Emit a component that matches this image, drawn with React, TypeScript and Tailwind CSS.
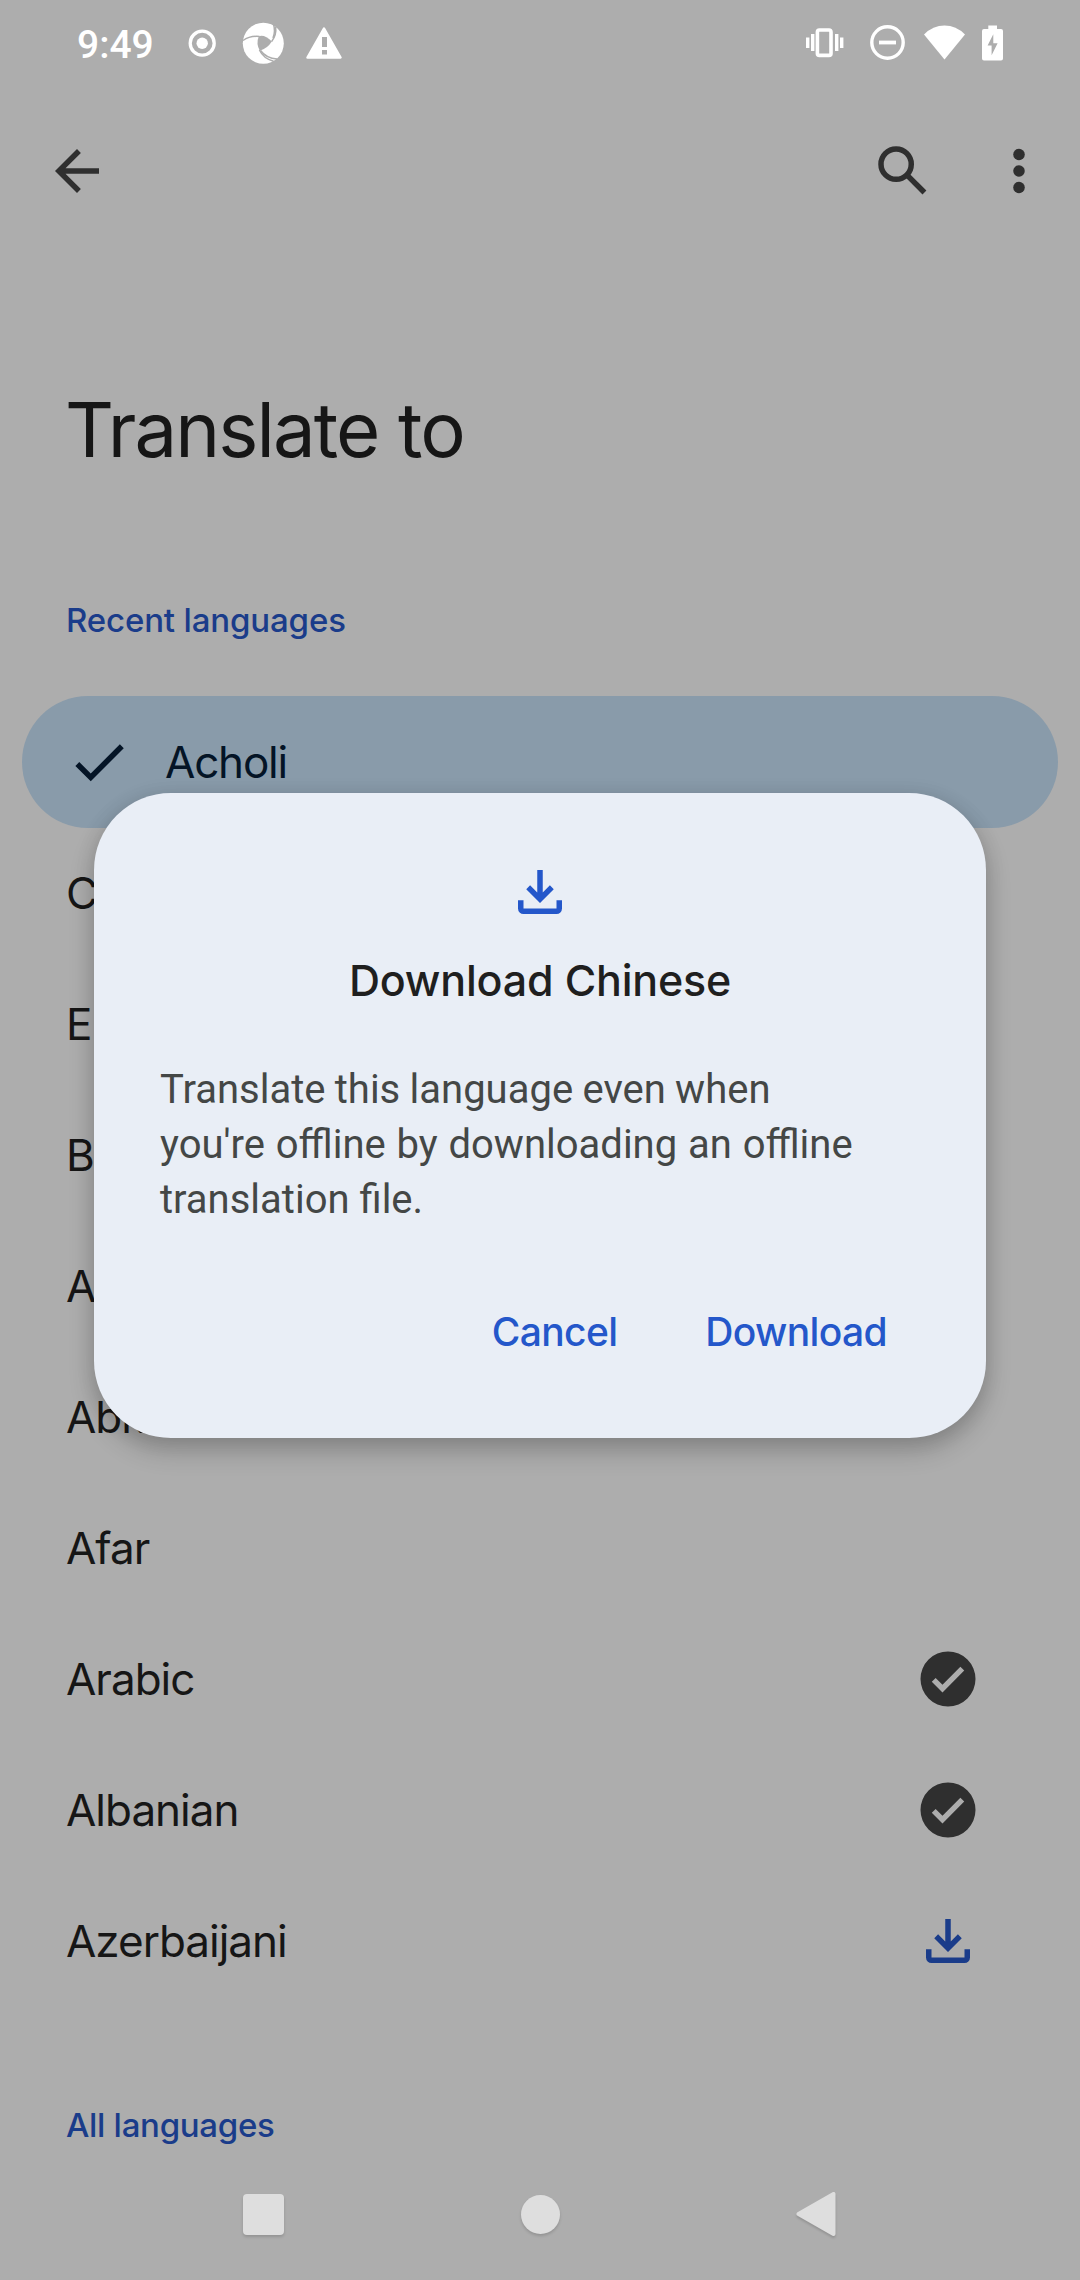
import type { ReactNode } from "react";

type Status = "downloaded" | "available";

const languages: { name: string; status?: Status }[] = [
  { name: "Chinese" },
  { name: "English" },
  { name: "Bali" },
  { name: "Afrikaans" },
  { name: "Abkhaz" },
  { name: "Afar" },
  { name: "Arabic", status: "downloaded" },
  { name: "Albanian", status: "downloaded" },
  { name: "Azerbaijani", status: "available" },
];

function Icon({ className = "", children }: { className?: string; children: ReactNode }) {
  return (
    <svg viewBox="0 0 24 24" fill="currentColor" className={`size-[66px] shrink-0 ${className}`}>
      {children}
    </svg>
  );
}

function DownloadIcon({ className }: { className: string }) {
  return (
    <Icon className={className}>
      <path d="M12 16l-5-5 1.4-1.45 2.6 2.6V4h2v8.15l2.6-2.6L17 11zM6 20q-.825 0-1.413-.587T4 18v-3h2v3h12v-3h2v3q0 .825-.587 1.413T18 20z" />
    </Icon>
  );
}

function StatusBar() {
  return (
    <header className="flex h-[88px] items-start text-white">
      <span className="ml-[77px] mt-[21px] h-12 w-[75px] whitespace-nowrap font-[Roboto] text-[39px] font-medium leading-[48px]">
        9:49
      </span>
      <svg viewBox="0 0 28 28" className="ml-[36px] mt-[29px] size-7">
        <circle cx="14.2" cy="14.2" r="12" fill="none" stroke="currentColor" strokeWidth="3.3" />
        <circle cx="14.2" cy="14.2" r="5.7" fill="currentColor" />
      </svg>
      <svg viewBox="0 0 42 42" className="ml-[26px] mt-[22px] size-[42px]">
        <circle cx="21.3" cy="21.3" r="20.5" fill="currentColor" />
        <path d="M16.8 14.2Q23 12.4 29.8 19.6Q25.5 26.5 17.8 28.8Q13.8 21.5 16.8 14.2Z" fill="#adadad" />
        <g fill="none" stroke="#adadad" strokeWidth="1.5">
          <path d="M1 18.5Q8 13.5 17.5 14.4" />
          <path d="M33.6 4.5Q34.8 12.5 29.6 19.6" />
          <path d="M31.3 1.5Q33.8 9 31 16" />
          <path d="M17.4 28Q21.5 36.5 31.5 39.2" />
          <path d="M18.5 28.5Q24.5 36.5 35 37" />
        </g>
      </svg>
      <svg viewBox="0 0 36 32" className="ml-[22px] mt-[27px] h-8 w-9">
        <path d="M18 1.5L34.5 30.5H1.5Z" fill="currentColor" stroke="currentColor" strokeWidth="2.5" strokeLinejoin="round" />
        <path d="M16 10h5v10h-5zM16 23h5v4.5h-5z" fill="#adadad" />
      </svg>
      <svg viewBox="0 0 40 30" className="ml-auto mt-[28px] h-[30px] w-10">
        <rect x="12.4" y="2" width="13.6" height="25.4" rx="2" fill="none" stroke="currentColor" strokeWidth="3.6" />
        <path d="M6 6h3.4v17H6zM1 9.5h3.4v10.500H1zM30 6h3.400v17H30zM35 9.5h3.400v10.500H35z" fill="currentColor" />
      </svg>
      <svg viewBox="0 0 36 36" className="ml-[25px] mt-[24px] size-9">
        <circle cx="17.500" cy="18.500" r="15.700" fill="none" stroke="currentColor" strokeWidth="3.400" />
        <path d="M9 16.600h17v3.800H9z" fill="currentColor" />
      </svg>
      <svg viewBox="0 0 42 36" className="ml-[18px] mt-[24px] h-9 w-[42px]">
        <path d="M0 10.400Q9 1.500 20.500 1.500T41 10.400L20.500 35.500Z" fill="currentColor" />
      </svg>
      <svg viewBox="0 0 22 36" className="ml-[16px] mr-[76px] mt-[25px] h-9 w-[22px]">
        <path d="M6.300 .600h8.700V4H19q2 0 2 2v27.500q0 2-2 2H2q-2 0-2-2V6q0-2 2-2h4.300z" fill="currentColor" />
        <path d="M11.300 9.300L5.600 20.400h4V30.300L15.600 18.300h-4.300z" fill="#adadad" />
      </svg>
    </header>
  );
}

function AppBar() {
  return (
    <div className="flex h-[166px] items-center pl-[44px] pr-[28px] text-[#2f2f2f]">
      <Icon>
        <path d="M20 11H7.830l5.590-5.590L12 4l-8 8 8 8 1.410-1.410L7.830 13H20z" />
      </Icon>
      <Icon className="ml-auto">
        <g fill="none" stroke="currentColor" strokeWidth="2">
          <circle cx="9.500" cy="9.500" r="5.500" />
          <path d="M13.400 13.400l6.400 6.400" />
        </g>
      </Icon>
      <Icon className="ml-[50px]">
        <circle cx="12" cy="6" r="2.100" />
        <circle cx="12" cy="12" r="2.100" />
        <circle cx="12" cy="18" r="2.100" />
      </Icon>
    </div>
  );
}

function SectionHeader({ children, className }: { children: ReactNode; className: string }) {
  return (
    <h2 className={`pl-[66px] text-[33px] font-medium leading-[48px] text-[#1a3c8a] ${className}`}>
      {children}
    </h2>
  );
}

function LanguageRow({ name, status }: { name: string; status?: Status }) {
  return (
    <li className="flex h-[131px] items-center justify-between pl-[66px] pr-[99px]">
      <span>{name}</span>
      {status === "downloaded" && (
        <Icon className="text-[#2f2f2f]">
          <path
            fillRule="evenodd"
            d="M12 2a10 10 0 1 0 0 20a10 10 0 1 0 0-20zM10 16.900L6.100 13l1.400-1.400l2.500 2.500L16.500 7.500l1.400 1.400z"
          />
        </Icon>
      )}
      {status === "available" && <DownloadIcon className="text-[#1a3c8a]" />}
    </li>
  );
}

function NavigationBar() {
  return (
    <nav className="flex h-[132px] items-center pl-[243px] text-[#dedede]">
      <span className="size-[41px] rounded-[4px] bg-[#dedede] shadow-[0_2px_3px_rgba(0,0,0,0.15)]" />
      <span className="ml-[237px] size-[39px] rounded-full bg-[#dedede] shadow-[0_2px_3px_rgba(0,0,0,0.15)]" />
      <svg viewBox="0 0 40 46" className="ml-[236px] h-[46px] w-10 drop-shadow-[0_2px_1px_rgba(0,0,0,0.15)]">
        <path d="M37.500 3v40L2.500 23z" fill="currentColor" stroke="currentColor" strokeWidth="4" strokeLinejoin="round" />
      </svg>
    </nav>
  );
}

function DownloadDialog() {
  return (
    <div
      role="dialog"
      className="absolute left-[94px] top-[793px] flex h-[645px] w-[892px] flex-col rounded-[77px] bg-[#e9eef6] px-[66px] pt-[66px] shadow-[0_13px_26px_rgba(0,0,0,0.2),0_2px_20px_rgba(0,0,0,0.1)]"
    >
      <DownloadIcon className="self-center text-[#2457ca]" />
      <h3 className="mt-[25px] text-center text-[43px] font-medium leading-[60px] tracking-[-0.2px] text-[#1f1f1f]">
        Download Chinese
      </h3>
      <p className="mt-[52px] font-[Roboto] text-[40px] leading-[55px] text-[#444746]">
        <span className="[word-spacing:-0.6px]">Translate this language even when</span>
        <br />
        <span className="[word-spacing:0.9px]">you're offline by downloading an offline</span>
        <br />
        translation file.
      </p>
      <div className="mt-[39px] flex justify-end gap-[22px] text-[39px] font-medium tracking-[-0.65px] text-[#2457ca]">
        <button className="h-[132px] px-[33px]">Cancel</button>
        <button className="h-[132px] px-[33px]">Download</button>
      </div>
    </div>
  );
}

export default function App() {
  return (
    <div className="relative h-[2280px] w-[1080px] overflow-hidden bg-[#adadad] font-[Inter,sans-serif] text-[#161616]">
      <StatusBar />
      <AppBar />
      <h1 className="h-[248px] pl-[65px] pt-[125px] text-[76px] leading-[100px] tracking-[-1.900px]">Translate to</h1>
      <SectionHeader className="h-[194px] pt-[94px] tracking-[-0.15px]">Recent languages</SectionHeader>
      <ul className="text-[44px] tracking-[-1px]">
        <li className="mx-[22px] -mb-px flex h-[132px] items-center gap-[33px] rounded-full bg-[#899baa] pl-[44px] text-[#041426]">
          <Icon>
            <path d="M9 16.170L4.830 12l-1.420 1.410L9 19 21 7l-1.410-1.410z" />
          </Icon>
          <span className="tracking-[-1.200px]">Acholi</span>
        </li>
        {languages.map((language) => (
          <LanguageRow key={language.name} {...language} />
        ))}
      </ul>
      <SectionHeader className="h-[142px] pt-[95px] tracking-[-0.3px]">All languages</SectionHeader>
      <NavigationBar />
      <DownloadDialog />
    </div>
  );
}
